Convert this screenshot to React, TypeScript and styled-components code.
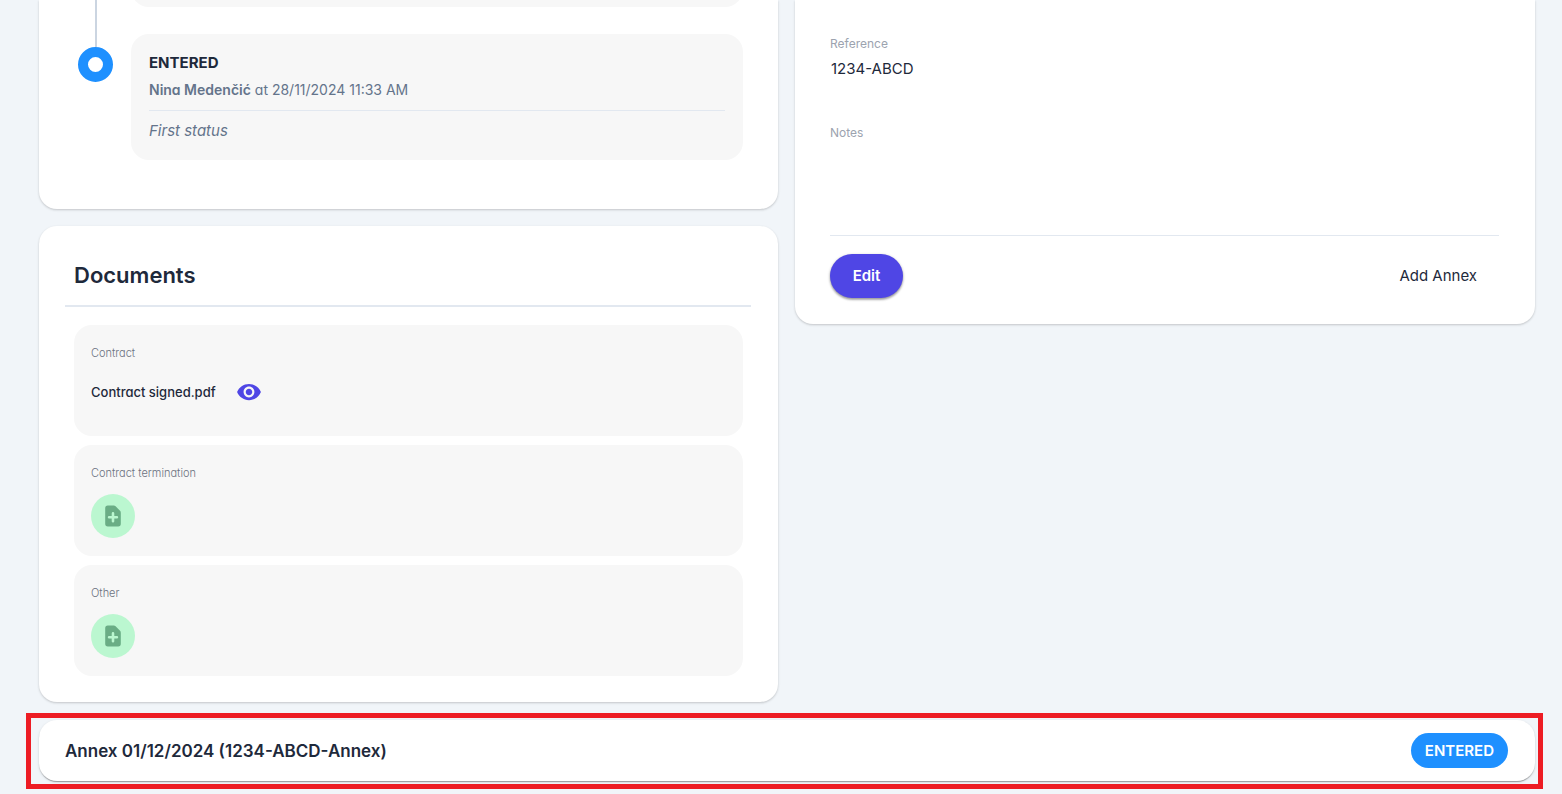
import React from "react";
import styled, { createGlobalStyle } from "styled-components";
import { MdVisibility } from "react-icons/md";
import { HiDocumentAdd } from "react-icons/hi";

const GlobalStyle = createGlobalStyle`
  *, *::before, *::after { box-sizing: border-box; }
  body {
    margin: 0;
    background: #f1f5f9;
    color: #1e293b;
    font-family: Inter, "Liberation Sans", sans-serif;
    font-size: 15px;
    line-height: 24px;
  }
  button, input, textarea { font: inherit; color: inherit; font-feature-settings: inherit; letter-spacing: inherit; }
  h2, h3, p { margin: 0; }
`;

const Page = styled.main`
  padding: 0 27px 13px 39px;
  overflow: hidden;
`;

const Columns = styled.div`
  display: grid;
  grid-template-columns: calc(50% - 9px) 1fr;
  align-items: start;
  gap: 17px;
`;

const Column = styled.div`
  display: flex;
  flex-direction: column;
  gap: 17px;
`;

const Card = styled.section<{ $cut?: boolean }>`
  background: #fff;
  border-radius: ${(p) => (p.$cut ? "0 0 18px 18px" : "18px")};
  box-shadow: 0 1px 3px rgba(0, 0, 0, 0.1), 0 1px 2px rgba(0, 0, 0, 0.1);
`;

const Timeline = styled.ol`
  list-style: none;
  margin: 0;
  padding: 0 35px 49px 39px;
`;

const TimelineItem = styled.li`
  display: grid;
  grid-template-columns: 35px 1fr;
  column-gap: 18px;
`;

const Rail = styled.div`
  display: flex;
  flex-direction: column;
  align-items: center;
`;

const RailLine = styled.span<{ $grow?: boolean }>`
  width: 2px;
  background: #cbd5e1;
  height: 13px;
  flex: ${(p) => (p.$grow ? "1" : "none")};
`;

const Marker = styled.span`
  width: 35px;
  height: 35px;
  border: 10px solid #1e90ff;
  border-radius: 50%;
  background: #fff;
`;

const StatusBox = styled.article`
  padding: 17px 18px;
  background: #f7f7f7;
  border-radius: 18px;
  font-feature-settings: "cv11";
`;

const PreviousStatus = styled.div`
  height: 40px;
  margin: -33px 0 27px;
  background: #f7f7f7;
  border-radius: 18px;
`;

const StatusName = styled.h3`
  font-size: 15px;
  font-weight: 700;
  line-height: 24px;
`;

const StatusMeta = styled.p`
  padding: 3px 0 8px;
  border-bottom: 1px solid #e2e8f0;
  color: #64748b;
  font-size: 14px;

  strong { font-weight: 600; }
`;

const StatusNote = styled.p`
  padding-top: 8px;
  color: #64748b;
  font-style: italic;
`;

const DocumentsCard = styled(Card)`
  padding: 26px;
`;

const DocumentsTitle = styled.h2`
  margin-right: 1px;
  padding: 8px 9px 14px;
  border-bottom: 2px solid #e2e8f0;
  font-size: 22px;
  font-weight: 600;
  line-height: 31px;
`;

const DocumentList = styled.div`
  display: flex;
  flex-direction: column;
  gap: 9px;
  padding: 18px 9px 0;
`;

const DocumentBox = styled.article`
  height: 111px;
  padding: 18px 17px;
  background: #f7f7f7;
  border-radius: 18px;
  font-feature-settings: "cv11";
`;

const DocumentKind = styled.h3`
  color: #6b7280;
  font-size: 11px;
  font-weight: 300;
  line-height: 20px;
`;

const DocumentFile = styled.div`
  display: flex;
  align-items: center;
  gap: 20px;
  height: 58px;
  font-size: 13px;
  font-weight: 500;
`;

const ViewButton = styled.button`
  display: flex;
  padding: 0;
  border: 0;
  background: none;
  color: #4f46e5;
`;

const AddFileButton = styled.button`
  display: flex;
  align-items: center;
  justify-content: center;
  width: 44px;
  height: 44px;
  margin-top: 11px;
  padding: 0;
  border: 0;
  border-radius: 50%;
  background: #bbf7d0;
  color: #6aad85;
`;

const Details = styled.div`
  padding: 34px 36px 26px 35px;
`;

const Field = styled.div<{ $tall?: boolean }>`
  display: flex;
  flex-direction: column;
  height: ${(p) => (p.$tall ? "112px" : "89px")};
`;

const FieldLabel = styled.label`
  color: #9ca3af;
  font-size: 12px;
  line-height: 20px;
`;

const FieldInput = styled.input`
  width: 100%;
  padding: 3px 1px;
  border: 0;
  background: none;
  outline: none;
`;

const FieldText = styled.textarea`
  width: 100%;
  height: 70px;
  padding: 3px 1px;
  border: 0;
  background: none;
  outline: none;
  resize: none;
`;

const Actions = styled.div`
  display: flex;
  justify-content: space-between;
  padding-top: 18px;
  border-top: 1px solid #e2e8f0;
`;

const PillButton = styled.button<{ $primary?: boolean }>`
  height: 44px;
  min-width: 73px;
  padding: 0 22px;
  border: 0;
  border-radius: 22px;
  background: ${(p) => (p.$primary ? "#4f46e5" : "transparent")};
  color: ${(p) => (p.$primary ? "#fff" : "#1e293b")};
  font-weight: ${(p) => (p.$primary ? 600 : 400)};
  box-shadow: ${(p) =>
    p.$primary ? "0 1px 3px rgba(0, 0, 0, 0.3), 0 2px 2px rgba(0, 0, 0, 0.2)" : "none"};
`;

const AnnexFrame = styled.div`
  position: relative;
  margin-top: 18px;

  &::after {
    content: "";
    position: absolute;
    inset: -7px -8px -8px -13px;
    border: 5px solid #ed1c24;
    pointer-events: none;
  }
`;

const AnnexHeader = styled.button`
  display: flex;
  align-items: center;
  justify-content: space-between;
  width: 100%;
  height: 61px;
  padding: 0 27px 0 26px;
  border: 0;
  border-radius: 18px;
  background: #fff;
  box-shadow: 0 2px 1px -1px rgba(0, 0, 0, 0.2), 0 1px 1px rgba(0, 0, 0, 0.14),
    0 1px 3px rgba(0, 0, 0, 0.12);
`;

const AnnexTitle = styled.span`
  font-size: 17px;
  font-weight: 600;
`;

const StatusBadge = styled.span`
  padding: 0 14px;
  border-radius: 18px;
  background: #1e90ff;
  color: #fff;
  font-weight: 600;
  line-height: 35px;
`;

function EmptyDocument({ kind }: { kind: string }) {
  return (
    <DocumentBox>
      <DocumentKind>{kind}</DocumentKind>
      <AddFileButton type="button" aria-label={`Add ${kind}`}>
        <HiDocumentAdd size={26} />
      </AddFileButton>
    </DocumentBox>
  );
}

export default function App() {
  return (
    <>
      <GlobalStyle />
      <Page>
        <Columns>
          <Column>
            <Card $cut>
              <Timeline>
                <TimelineItem>
                  <Rail>
                    <RailLine $grow />
                  </Rail>
                  <PreviousStatus />
                </TimelineItem>
                <TimelineItem>
                  <Rail>
                    <RailLine />
                    <Marker />
                  </Rail>
                  <StatusBox>
                    <StatusName>ENTERED</StatusName>
                    <StatusMeta>
                      <strong>Nina Medenčić</strong> at 28/11/2024 11:33 AM
                    </StatusMeta>
                    <StatusNote>First status</StatusNote>
                  </StatusBox>
                </TimelineItem>
              </Timeline>
            </Card>
            <DocumentsCard>
              <DocumentsTitle>Documents</DocumentsTitle>
              <DocumentList>
                <DocumentBox>
                  <DocumentKind>Contract</DocumentKind>
                  <DocumentFile>
                    Contract signed.pdf
                    <ViewButton type="button" aria-label="View Contract signed.pdf">
                      <MdVisibility size={26} />
                    </ViewButton>
                  </DocumentFile>
                </DocumentBox>
                <EmptyDocument kind="Contract termination" />
                <EmptyDocument kind="Other" />
              </DocumentList>
            </DocumentsCard>
          </Column>
          <Card $cut>
            <Details>
              <Field>
                <FieldLabel htmlFor="reference">Reference</FieldLabel>
                <FieldInput id="reference" readOnly value="1234-ABCD" />
              </Field>
              <Field $tall>
                <FieldLabel htmlFor="notes">Notes</FieldLabel>
                <FieldText id="notes" readOnly value="" />
              </Field>
              <Actions>
                <PillButton type="button" $primary>
                  Edit
                </PillButton>
                <PillButton type="button">Add Annex</PillButton>
              </Actions>
            </Details>
          </Card>
        </Columns>
        <AnnexFrame>
          <AnnexHeader type="button" aria-expanded="false">
            <AnnexTitle>Annex 01/12/2024 (1234-ABCD-Annex)</AnnexTitle>
            <StatusBadge>ENTERED</StatusBadge>
          </AnnexHeader>
        </AnnexFrame>
      </Page>
    </>
  );
}
